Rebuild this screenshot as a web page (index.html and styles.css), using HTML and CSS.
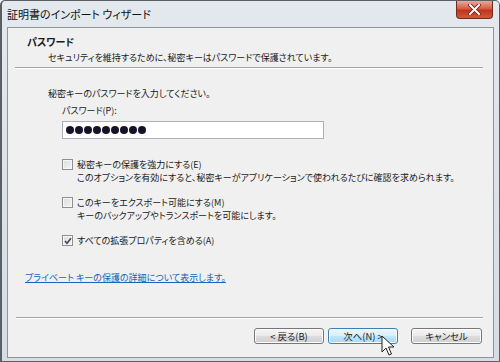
FILE: index.html
```html
<!DOCTYPE html>
<html lang="ja">
<head>
    <meta charset="UTF-8">
    <title>証明書のインポート ウィザード</title>
    <link rel="stylesheet" href="styles.css">
</head>
<body>
    <div class="window">
        <!-- Title bar -->
        <div class="titlebar">
            <span class="title">証明書のインポート ウィザード</span>
            <span class="close">
                <svg width="13" height="11" viewBox="0 0 13 11">
                    <path d="M2 1 L11 10 M11 1 L2 10" stroke="#6b1d14" stroke-width="3.6" stroke-linecap="square"/>
                    <path d="M2 1 L11 10 M11 1 L2 10" stroke="#fff" stroke-width="2" stroke-linecap="square"/>
                </svg>
            </span>
        </div>

        <div class="client">
            <!-- Header -->
            <div class="header">
                <div class="heading">パスワード</div>
                <div class="subheading">セキュリティを維持するために、秘密キーはパスワードで保護されています。</div>
            </div>
            <div class="rule"></div>

            <!-- Body -->
            <div class="content">
                <p class="prompt">秘密キーのパスワードを入力してください。</p>

                <div class="field">
                    <label class="field-label">パスワード(P):</label>
                    <div class="password">
                        <span class="dot"></span><span class="dot"></span><span class="dot"></span>
                        <span class="dot"></span><span class="dot"></span><span class="dot"></span>
                        <span class="dot"></span><span class="dot"></span><span class="dot"></span>
                    </div>
                </div>

                <div class="option first">
                    <span class="box"></span>
                    <div class="option-text">
                        <div>秘密キーの保護を強力にする(E)</div>
                        <div>このオプションを有効にすると、秘密キーがアプリケーションで使われるたびに確認を求められます。</div>
                    </div>
                </div>

                <div class="option">
                    <span class="box"></span>
                    <div class="option-text">
                        <div>このキーをエクスポート可能にする(M)</div>
                        <div>キーのバックアップやトランスポートを可能にします。</div>
                    </div>
                </div>

                <div class="option">
                    <span class="box">
                        <svg width="8" height="8" viewBox="0 0 8 8">
                            <path d="M1 4 L3 6.3 L7 1.3" fill="none" stroke="#444" stroke-width="1.5"/>
                        </svg>
                    </span>
                    <div class="option-text">
                        <div>すべての拡張プロパティを含める(A)</div>
                    </div>
                </div>
            </div>

            <a class="link" href="#">プライベート キーの保護の詳細について表示します。</a>

            <!-- Footer -->
            <div class="rule footer-rule"></div>
            <div class="buttons">
                <span class="btn">&lt; 戻る(B)</span>
                <span class="btn active">次へ(N) &gt;</span>
                <span class="btn cancel">キャンセル</span>
            </div>
        </div>

        <!-- Mouse pointer -->
        <svg class="cursor" width="14" height="22" viewBox="0 0 14 22">
            <path d="M1 1 L1 17 L5 13 L8 20 L10.5 19 L7.5 12 L13 12 Z" fill="#fff" stroke="#222" stroke-width="1" stroke-linejoin="round"/>
        </svg>
    </div>
</body>
</html>
```

FILE: styles.css
```css
* {
    margin: 0;
    padding: 0;
    box-sizing: border-box;
}

body {
    font-family: "Noto Sans CJK JP", "Noto Sans", sans-serif;
    font-feature-settings: "palt";
    color: #1a1a1a;
    background: #fff;
}

/* Window frame */
.window {
    position: relative;
    width: 500px;
    height: 362px;
    background: linear-gradient(180deg, #e4e9ee 0%, #dde3e9 40%, #d6dde4 100%);
    border: 1px solid #5a5f66;
    border-left-width: 2px;
    border-radius: 5px 5px 0 0;
    display: flex;
    flex-direction: column;
}

.titlebar {
    height: 26px;
    flex-shrink: 0;
    display: flex;
    align-items: flex-start;
    justify-content: space-between;
    padding-left: 5px;
}

.title {
    font-size: 11px;
    line-height: 12px;
    margin-top: 7px;
    color: #111;
}

.close {
    width: 37px;
    height: 18px;
    margin-right: 6px;
    background: linear-gradient(180deg, #e9a99c 0%, #d7573f 48%, #c0321c 52%, #d25a36 100%);
    border: 1px solid #6e2a20;
    border-top: none;
    border-radius: 0 0 4px 4px;
    display: flex;
    align-items: center;
    justify-content: center;
}

/* Client area */
.client {
    flex: 1;
    margin: 0 5px 3px 5px;
    background: #f0f0f0;
    border: 1px solid #8d949b;
    display: flex;
    flex-direction: column;
}

.header {
    padding: 7px 0 0 19px;
    height: 39px;
    flex-shrink: 0;
}

.heading {
    font-size: 10px;
    font-weight: bold;
    line-height: 14px;
}

.subheading {
    font-size: 9px;
    line-height: 14px;
    margin-top: 2px;
    padding-left: 21px;
}

.rule {
    height: 2px;
    flex-shrink: 0;
    margin: 0 10px 0 7px;
    border-top: 1px solid #a5a5a5;
    border-bottom: 1px solid #ffffff;
}

.content {
    padding: 18px 0 0 40px;
    font-size: 9px;
    line-height: 13px;
}

.prompt {
    margin-bottom: 4px;
}

.field {
    padding-left: 14px;
}

.field-label {
    display: block;
    margin-bottom: 4px;
}

.password {
    width: 262px;
    height: 18px;
    background: #fff;
    border: 1px solid #acb1b7;
    display: flex;
    align-items: center;
    gap: 1px;
    padding-left: 3px;
}

.dot {
    width: 8px;
    height: 8px;
    border-radius: 50%;
    background: #15122a;
}

.option {
    display: flex;
    align-items: flex-start;
    gap: 4px;
    padding-left: 14px;
    margin-top: 12px;
}

.option.first {
    margin-top: 19px;
}

.box {
    width: 11px;
    height: 11px;
    margin-top: 1px;
    flex-shrink: 0;
    border: 1px solid #8f8f8f;
    background: linear-gradient(135deg, #dcdcdc 0%, #f4f4f4 100%);
    box-shadow: inset 0 0 0 1px #f6f6f6;
    display: flex;
    align-items: center;
    justify-content: center;
}

.link {
    font-size: 9px;
    line-height: 13px;
    margin: 24px 0 0 17px;
    color: #1466b8;
    text-decoration: underline;
    align-self: flex-start;
}

.footer-rule {
    margin-top: 33px;
    margin-right: 10px;
    margin-left: 8px;
}

.buttons {
    display: flex;
    justify-content: flex-end;
    padding: 9px 11px 0 0;
    gap: 4px;
}

.btn {
    width: 70px;
    height: 16px;
    font-size: 9.4px;
    line-height: 14px;
    text-align: center;
    border: 1px solid #767676;
    border-radius: 3px;
    background: linear-gradient(180deg, #f5f5f5 0%, #ebebeb 48%, #dddddd 52%, #cfcfcf 100%);
    box-shadow: inset 0 0 0 1px #fcfcfc;
}

.btn.active {
    border-color: #3c7fb1;
    background: linear-gradient(180deg, #eaf6fd 0%, #d9f0fc 48%, #bee6fd 52%, #a7d9f5 100%);
}

.btn.cancel {
    width: 71px;
    margin-left: 9px;
}

.cursor {
    position: absolute;
    left: 379px;
    top: 334px;
}
```
